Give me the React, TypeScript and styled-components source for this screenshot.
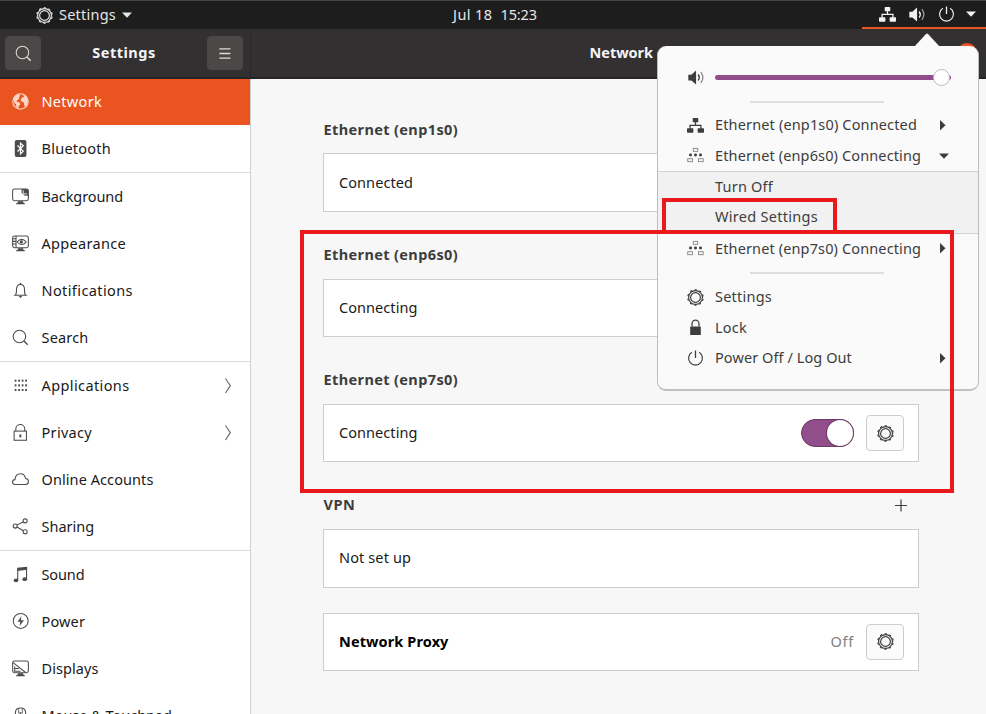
import React from "react";
import styled, { createGlobalStyle } from "styled-components";

const GlobalStyle = createGlobalStyle`
  * { box-sizing: border-box; }
  body {
    margin: 0;
    overflow: hidden;
    font-family: "Noto Sans", "Open Sans", sans-serif;
    font-size: 14.5px;
    line-height: 20px;
    color: #1a1a1a;
  }
  svg { display: block; flex: none; }
`;

const Desktop = styled.div`
  position: relative;
  width: 986px;
  height: 714px;
  display: flex;
  flex-direction: column;
  overflow: hidden;
  background: #f7f7f7;
`;

const Label = styled.span<{ $ls?: number; $bold?: boolean }>`
  display: block;
  margin-bottom: 2px;
  letter-spacing: ${(p) => p.$ls ?? 0}px;
  font-weight: ${(p) => (p.$bold ? 700 : 400)};
  white-space: pre;
`;

/* ---------- top panel ---------- */

const TopBar = styled.div`
  flex: none;
  height: 29px;
  display: grid;
  grid-template-columns: 1fr auto 1fr;
  align-items: center;
  background: #1d1d1d;
  border-top: 1px solid #454545;
  color: #e6e6e6;
`;

const AppMenu = styled.div`
  display: flex;
  align-items: center;
  gap: 6px;
  padding-left: 36px;
`;

const Clock = styled.div`
  display: flex;
  gap: 8px;
  padding-left: 4px;
`;

const StatusArea = styled.div`
  justify-self: end;
  align-self: stretch;
  width: 124px;
  display: flex;
  align-items: center;
  padding-left: 17px;
  border-bottom: 2px solid #e95420;
  color: #f2f2f2;
`;

const StatusItem = styled.div<{ $gap: number }>`
  margin-right: ${(p) => p.$gap}px;
`;

/* ---------- window header ---------- */

const HeaderBar = styled.div`
  position: relative;
  flex: none;
  height: 50px;
  display: flex;
  background: #333031;
  border-bottom: 2px solid #262324;
  color: #f5f5f5;
`;

const HeaderLeft = styled.div`
  width: 251px;
  flex: none;
  display: flex;
  align-items: center;
  justify-content: space-between;
  padding: 0 7px 0 5px;
  border-right: 1px solid #2a2828;
`;

const HeaderButton = styled.button`
  width: 36px;
  height: 34px;
  display: flex;
  align-items: center;
  justify-content: center;
  padding: 0;
  border: 1px solid #494846;
  border-radius: 4px;
  background: #4a4947;
  color: #dcdcdc;
`;

const HeaderRight = styled.div`
  flex: 1;
  display: flex;
  align-items: center;
  justify-content: space-between;
  padding: 0 9px 0 338.5px;
`;

const CloseButton = styled.div`
  width: 20px;
  height: 20px;
  border-radius: 50%;
  background: #e95420;
`;

/* ---------- sidebar ---------- */

const Body = styled.div`
  flex: 1;
  display: flex;
  min-height: 0;
  margin-top: -1px;
`;

const Sidebar = styled.nav`
  width: 251px;
  flex: none;
  overflow: hidden;
  background: #fff;
  border-right: 1px solid #d0d0d0;
`;

const Group = styled.div`
  & + & { border-top: 1px solid #dcdcdc; }
`;

const NavRow = styled.div<{ $active?: boolean }>`
  height: 47px;
  display: flex;
  align-items: center;
  padding: 0 18px 0 12px;
  gap: 12.5px;
  background: ${(p) => (p.$active ? "#e95420" : "transparent")};
  color: ${(p) => (p.$active ? "#fff" : "#1a1a1a")};
  & > svg { color: ${(p) => (p.$active ? "#fbd5c6" : "#4c4c4c")}; }
  & > svg:last-child { margin-left: auto; color: #777; }
`;

/* ---------- content ---------- */

const Content = styled.main`
  flex: 1;
  padding: 38.4px 67px 0 72px;
`;

const Section = styled.section`
  height: 125.3px;
`;

const SectionTitle = styled.div`
  height: 37px;
  display: flex;
  align-items: flex-start;
  justify-content: space-between;
  padding: 2.2px 12px 0 0.5px;
  color: #3d3d3d;
`;

const Card = styled.div`
  height: 58.4px;
  display: flex;
  align-items: center;
  justify-content: space-between;
  padding: 0 14px 0 15px;
  background: #fff;
  border: 1px solid #cdcdcd;
`;

const ProxyCard = styled(Card)`
  margin-top: -5px;
  height: 58px;
  color: #000;
`;

const Controls = styled.div`
  display: flex;
  align-items: center;
  gap: 12px;
  color: #808080;
`;

const Toggle = styled.div`
  width: 53px;
  height: 28px;
  display: flex;
  justify-content: flex-end;
  border: 1px solid #6c3a67;
  border-radius: 14px;
  background: #924d8b;
`;

const Knob = styled.div`
  width: 26px;
  height: 26px;
  border-radius: 50%;
  background: #fff;
  box-shadow: 0 0 0 1px #6c3a67;
`;

const IconButton = styled.button`
  width: 38px;
  height: 36px;
  display: flex;
  align-items: center;
  justify-content: center;
  padding: 0;
  border: 1px solid #cdcdcd;
  border-radius: 4px;
  background: #fbfbfb;
  color: #3d3d3d;
`;

const PlusBox = styled.div`
  padding-top: 5px;
  color: #3d3d3d;
`;

/* ---------- system menu ---------- */

const Popover = styled.div`
  position: absolute;
  left: 657px;
  top: 46px;
  width: 322px;
  height: 345px;
  padding-top: 17px;
  border: 1px solid #bdbdbd;
  border-bottom: 2px solid #c0c0c0;
  border-top: 0;
  border-radius: 9px;
  background: #fafafa;
  color: #3d3d3d;
`;

const Arrow = styled.svg`
  position: absolute;
  left: 256px;
  top: -13px;
`;

const SliderRow = styled.div`
  height: 28px;
  display: flex;
  align-items: center;
  gap: 10px;
  padding: 0 27px 0 30px;
`;

const Track = styled.div`
  flex: 1;
  height: 5px;
  display: flex;
  align-items: center;
  justify-content: flex-end;
  padding-right: 1px;
  border-radius: 3px;
  background: #924d8b;
`;

const Thumb = styled.div`
  width: 17px;
  height: 17px;
  flex: none;
  border: 1px solid #bcbcbc;
  border-radius: 50%;
  background: #fff;
`;

const Divider = styled.div<{ $before: number; $after: number }>`
  width: 134px;
  height: 2px;
  margin: ${(p) => p.$before}px 0 ${(p) => p.$after}px 92px;
  background: #dedede;
`;

const MenuRow = styled.div`
  height: 30.4px;
  display: flex;
  align-items: center;
  padding: 0 29px 0 29px;
  gap: 11px;
  & > svg:last-child { margin-left: auto; }
`;

const SubMenu = styled.div`
  height: 63px;
  display: flex;
  flex-direction: column;
  justify-content: center;
  background: #f1f1f1;
  border-top: 1px solid #d4d4d4;
  border-bottom: 1px solid #d4d4d4;
`;

const SubRow = styled.div`
  height: 30.4px;
  display: flex;
  align-items: center;
  padding-left: 57px;
`;

const Marker = styled.div<{ $x: number; $y: number; $w: number; $h: number }>`
  position: absolute;
  left: ${(p) => p.$x}px;
  top: ${(p) => p.$y}px;
  width: ${(p) => p.$w}px;
  height: ${(p) => p.$h}px;
  border: 4px solid #ea1a1c;
`;

/* ---------- icons ---------- */

const Svg = ({ children, size = 17 }: { children: React.ReactNode; size?: number }) => (
  <svg width={size} height={size} viewBox="0 0 16 16" fill="none" stroke="currentColor" strokeWidth="1">
    {children}
  </svg>
);

const GearIcon = () => (
  <Svg>
    <circle cx="8" cy="8" r="6.5" strokeWidth="1.1" />
    <circle cx="8" cy="8" r="7.3" strokeWidth="1" strokeDasharray="2.1 2.487" strokeDashoffset="-10.4" />
    <circle cx="8" cy="8" r="4.6" strokeWidth="1.1" />
  </Svg>
);

const SearchIcon = () => (
  <Svg>
    <circle cx="7" cy="7" r="5.9" />
    <path d="M11.2 11.2 14.8 14.8" strokeWidth="1.3" />
  </Svg>
);

const MenuIcon = () => (
  <Svg>
    <path d="M3.2 3.6h10.4M3.2 8h10.4M3.2 12.4h10.4" strokeWidth="1.2" />
  </Svg>
);

const GlobeIcon = () => (
  <Svg>
    <circle cx="8" cy="8" r="7.3" />
    <path
      d="M1.2 5.2 3.4 2.4 6.8 1l1 1.6-1.6 1.6.8 1.2-2.2 1.4-.6 1.4 2.6.6 1 1.8-1.6 2-.4 2.6-1.6-1.4-.4-3-2-2.2zM10 1.2l2.6 1.2 2 2.8.4 3-1 3-2 2-.6-2.6-.4-2-2.2-.6-.6-2.2 1.6-1.8 1.8-.2-.6-1.2z"
      fill="currentColor"
      stroke="none"
    />
  </Svg>
);

const BluetoothIcon = () => (
  <Svg>
    <rect x="2.6" y="0" width="11" height="16" rx="1.8" fill="currentColor" stroke="none" />
    <path d="M5.2 5.2 10.6 10.6 8 13V3l2.6 2.4L5.2 10.8" stroke="#fff" strokeWidth="1.1" />
  </Svg>
);

const BackgroundIcon = () => (
  <Svg>
    <rect x=".6" y="1" width="14.8" height="11" rx="1.8" />
    <path d="M9 1h5l1.4 1.4V7.4H12L9 4.4z" fill="currentColor" stroke="none" />
    <path d="M10.6 2.2v3.4h3.6" stroke="#fff" strokeWidth=".8" />
    <path d="M5.6 12.4h4.8l.4 1.6H12v1.4H4V14h1.2z" fill="currentColor" stroke="none" />
  </Svg>
);

const AppearanceIcon = () => (
  <Svg>
    <rect x=".6" y="1" width="14.8" height="11" rx="1.8" />
    <path d="M.6 3.5h3M.6 6h3M.6 8.5h3M3.8 1v11" />
    <path d="M4.8 6.6q4.2-5 8.6 0-4.4 4.6-8.6 0z" />
    <circle cx="8.8" cy="6.5" r="1.5" fill="currentColor" stroke="none" />
    <path d="M5.6 12.4h4.8l.4 1.6H12v1.4H4V14h1.2z" fill="currentColor" stroke="none" />
  </Svg>
);

const BellIcon = () => (
  <Svg>
    <path d="M3 12.4c1.4-.8 1.2-2.6 1.2-5C4.2 3.8 5.6 2.3 8 2.3s3.8 1.5 3.8 5.1c0 2.4-.2 4.2 1.2 5z" />
    <path d="M8 .8v1.6" strokeWidth="1.4" />
    <path d="M6.2 13.2h3.6L8 15z" fill="currentColor" stroke="none" />
  </Svg>
);

const GridIcon = () => (
  <Svg>
    {[3.4, 6.7, 10, 13.3].map((x) =>
      [3.6, 8, 12.4].map((y) => (
        <rect key={`${x}-${y}`} x={x - 0.9} y={y - 1.1} width="1.7" height="1.9" fill="currentColor" stroke="none" />
      ))
    )}
  </Svg>
);

const PadlockIcon = () => (
  <Svg>
    <rect x="2" y="6.7" width="11.6" height="8.6" />
    <path d="M3.6 6.7V4.7a4.2 4.2 0 0 1 8.4 0v2" />
    <rect x="7" y="9.8" width="1.8" height="2.8" fill="currentColor" stroke="none" />
  </Svg>
);

const CloudIcon = () => (
  <Svg>
    <path d="M3 12.7c-1.600 0-2.500-.9-2.500-2.300 0-1.300.9-2.200 2.300-2.300C3.100 4.600 5.100 2.500 8 2.500c2.700 0 4.300 1.900 4.700 4.600 1.800.2 2.800 1.300 2.800 2.800 0 1.700-1.100 2.800-2.800 2.800z" />
  </Svg>
);

const ShareIcon = () => (
  <Svg>
    <circle cx="3" cy="7.6" r="1.9" />
    <circle cx="12.4" cy="2.7" r="1.9" />
    <circle cx="12.4" cy="12.9" r="1.9" />
    <path d="M4.7 6.7 10.7 3.6M4.7 8.5l6 3.5" />
  </Svg>
);

const MusicIcon = () => (
  <Svg>
    <path d="M5 1.6 14.2.6v3L5 4.6z" fill="currentColor" stroke="none" />
    <path d="M5.4 2v11M13.7 1v11" />
    <ellipse cx="3.8" cy="13.5" rx="2.2" ry="1.8" fill="currentColor" stroke="none" />
    <ellipse cx="12" cy="12.4" rx="2.2" ry="1.8" fill="currentColor" stroke="none" />
  </Svg>
);

const BoltIcon = () => (
  <Svg>
    <circle cx="8.2" cy="7.5" r="7" />
    <path d="M8.800 3 5.200 8.200h2.500L7.200 12.200l4-5.400H8.500z" fill="currentColor" stroke="none" />
  </Svg>
);

const DisplayIcon = () => (
  <Svg>
    <rect x=".6" y="1" width="14.8" height="11" rx="1.8" />
    <path d="M1 2.500 12.500 11.500M2.500 6v4.600h5.500M2.500 8h4" />
    <path d="M5.6 12.4h4.8l.4 1.6H12v1.4H4V14h1.2z" fill="currentColor" stroke="none" />
  </Svg>
);

const MouseIcon = () => (
  <Svg>
    <path d="M3.2 16V5.500C3.2 2.500 4.800 1 8 1s4.800 1.500 4.800 4.500V16" />
    <path d="M8 5v2M6.300 1.500v4.200h3.400V1.500" strokeWidth=".8" />
  </Svg>
);

const ChevronIcon = () => (
  <svg width="8" height="18" viewBox="0 0 8 18" fill="none" stroke="currentColor" strokeWidth="1.3">
    <path d="M1.500 1.500 6.300 8.700 1.500 16" />
  </svg>
);

const WiredIcon = () => (
  <Svg>
    <g fill="currentColor" stroke="none">
      <rect x="5.4" y="1" width="5.2" height="4" rx=".6" />
      <rect x="0" y="10.6" width="6" height="4.200" rx=".6" />
      <rect x="10" y="10.6" width="6" height="4.200" rx=".6" />
    </g>
    <path d="M8 4v3.800M2.900 11V7.900h10.200V11" strokeWidth="1.2" />
  </Svg>
);

const WiredPendingIcon = () => (
  <Svg>
    <g stroke="#8a8a8a" strokeWidth=".9">
      <rect x="5.900" y="1.300" width="4.200" height="2.800" />
      <rect x=".7" y="11" width="4.400" height="2.800" />
      <rect x="10.800" y="11" width="4.400" height="2.800" />
    </g>
    <g fill="currentColor" stroke="none">
      <circle cx="3.300" cy="7.600" r="1.400" />
      <circle cx="8" cy="7.600" r="1.400" />
      <circle cx="12.700" cy="7.600" r="1.400" />
    </g>
  </Svg>
);

const SpeakerIcon = () => (
  <Svg>
    <path d="M.3 5.500h2.900L7.600 1.300v13.400L3.200 10.800H.3z" fill="currentColor" stroke="none" />
    <path d="M9.600 5.200q2 2.800 0 5.600" strokeWidth="1.3" />
    <path d="M12.100 3q3.800 5 0 10" opacity=".6" strokeWidth="1.2" />
  </Svg>
);

const PowerIcon = () => (
  <Svg>
    <path d="M4.600 2.200a6.500 6.500 0 1 0 6.800 0" strokeWidth="1.100" />
    <path d="M8 .5v7" strokeWidth="1.200" />
  </Svg>
);

const LockIcon = () => (
  <Svg>
    <rect x="3" y="7" width="10" height="8" rx=".5" fill="currentColor" stroke="none" />
    <path d="M4.700 7V4.600a3.300 3.600 0 0 1 6.600 0V7" strokeWidth="1.200" />
  </Svg>
);

const PlusIcon = () => (
  <svg width="13" height="13" viewBox="0 0 13 13" stroke="currentColor" strokeWidth="1.2">
    <path d="M7 .5v12M1 6.500h12" />
  </svg>
);

const CaretDown = () => (
  <svg width="10" height="6" viewBox="0 0 10 6" fill="currentColor">
    <path d="M0 .5h10L5 5.800z" />
  </svg>
);

const CaretRight = () => (
  <svg width="9" height="11" viewBox="0 0 9 11" fill="currentColor">
    <path d="M0 0v10.600L5.500 5.300z" />
  </svg>
);

/* ---------- data ---------- */

interface NavEntry {
  text: string;
  ls: number;
  icon: React.ReactNode;
  active?: boolean;
  more?: boolean;
}

const groups: NavEntry[][] = [
  [
    { text: "Network", ls: 0.31, icon: <GlobeIcon />, active: true },
    { text: "Bluetooth", ls: 0.25, icon: <BluetoothIcon /> },
  ],
  [
    { text: "Background", ls: -0.1, icon: <BackgroundIcon /> },
    { text: "Appearance", ls: 0.32, icon: <AppearanceIcon /> },
    { text: "Notifications", ls: 0.4, icon: <BellIcon /> },
    { text: "Search", ls: 0.18, icon: <SearchIcon /> },
  ],
  [
    { text: "Applications", ls: 0.39, icon: <GridIcon />, more: true },
    { text: "Privacy", ls: 0.31, icon: <PadlockIcon />, more: true },
    { text: "Online Accounts", ls: 0.08, icon: <CloudIcon /> },
    { text: "Sharing", ls: -0.02, icon: <ShareIcon /> },
  ],
  [
    { text: "Sound", ls: -0.11, icon: <MusicIcon /> },
    { text: "Power", ls: 0.14, icon: <BoltIcon /> },
    { text: "Displays", ls: 0.07, icon: <DisplayIcon /> },
    { text: "Mouse & Touchpad", ls: -0.02, icon: <MouseIcon /> },
  ],
];

const adapters = [
  { name: "Ethernet (enp1s0)", state: "Connected", ls: 0.07 },
  { name: "Ethernet (enp6s0)", state: "Connecting", ls: 0.06 },
  { name: "Ethernet (enp7s0)", state: "Connecting", ls: 0.06 },
];

export default function App() {
  return (
    <Desktop>
      <GlobalStyle />
      <TopBar>
        <AppMenu>
          <GearIcon />
          <Label $ls={0.23}>Settings</Label>
          <CaretDown />
        </AppMenu>
        <Clock>
          <Label $ls={0.4}>Jul 18</Label>
          <Label $ls={-0.11}>15:23</Label>
        </Clock>
        <StatusArea>
          <StatusItem $gap={13}><WiredIcon /></StatusItem>
          <StatusItem $gap={12}><SpeakerIcon /></StatusItem>
          <StatusItem $gap={11}><PowerIcon /></StatusItem>
          <CaretDown />
        </StatusArea>
      </TopBar>

      <HeaderBar>
        <HeaderLeft>
          <HeaderButton><SearchIcon /></HeaderButton>
          <Label $bold $ls={0.51}>Settings</Label>
          <HeaderButton><MenuIcon /></HeaderButton>
        </HeaderLeft>
        <HeaderRight>
          <Label $bold $ls={-0.03}>Network</Label>
          <CloseButton />
        </HeaderRight>
      </HeaderBar>

      <Body>
        <Sidebar>
          {groups.map((group, i) => (
            <Group key={i}>
              {group.map((item) => (
                <NavRow key={item.text} $active={item.active}>
                  {item.icon}
                  <Label $ls={item.ls}>{item.text}</Label>
                  {item.more && <ChevronIcon />}
                </NavRow>
              ))}
            </Group>
          ))}
        </Sidebar>

        <Content>
          {adapters.map((a) => (
            <Section key={a.name}>
              <SectionTitle>
                <Label $bold $ls={0.38}>{a.name}</Label>
              </SectionTitle>
              <Card>
                <Label $ls={a.ls}>{a.state}</Label>
                <Controls>
                  <Toggle><Knob /></Toggle>
                  <IconButton><GearIcon /></IconButton>
                </Controls>
              </Card>
            </Section>
          ))}
          <Section>
            <SectionTitle>
              <Label $bold $ls={0.59}>VPN</Label>
              <PlusBox><PlusIcon /></PlusBox>
            </SectionTitle>
            <Card>
              <Label $ls={0.12}>Not set up</Label>
            </Card>
          </Section>
          <ProxyCard>
            <Label $bold $ls={0.11}>Network Proxy</Label>
            <Controls>
              <Label $ls={0.73}>Off</Label>
              <IconButton><GearIcon /></IconButton>
            </Controls>
          </ProxyCard>
        </Content>
      </Body>

      <Popover>
        <Arrow width="26" height="14" viewBox="0 0 26 14" fill="#fafafa">
          <path d="M0 14 12 1q1-1 2 0l12 13z" />
        </Arrow>
        <SliderRow>
          <SpeakerIcon />
          <Track><Thumb /></Track>
        </SliderRow>
        <Divider $before={10} $after={7} />
        <MenuRow>
          <WiredIcon />
          <Label $ls={0.15}>Ethernet (enp1s0) Connected</Label>
          <CaretRight />
        </MenuRow>
        <MenuRow>
          <WiredPendingIcon />
          <Label $ls={0.13}>Ethernet (enp6s0) Connecting</Label>
          <CaretDown />
        </MenuRow>
        <SubMenu>
          <SubRow><Label $ls={0.21}>Turn Off</Label></SubRow>
          <SubRow><Label $ls={0.29}>Wired Settings</Label></SubRow>
        </SubMenu>
        <MenuRow>
          <WiredPendingIcon />
          <Label $ls={0.13}>Ethernet (enp7s0) Connecting</Label>
          <CaretRight />
        </MenuRow>
        <Divider $before={8} $after={8} />
        <MenuRow>
          <GearIcon />
          <Label $ls={0.23}>Settings</Label>
        </MenuRow>
        <MenuRow>
          <LockIcon />
          <Label $ls={0.23}>Lock</Label>
        </MenuRow>
        <MenuRow>
          <PowerIcon />
          <Label $ls={0.08}>Power Off / Log Out</Label>
          <CaretRight />
        </MenuRow>
      </Popover>

      <Marker $x={662} $y={198} $w={175} $h={36} />
      <Marker $x={300} $y={230} $w={654} $h={263} />
    </Desktop>
  );
}
